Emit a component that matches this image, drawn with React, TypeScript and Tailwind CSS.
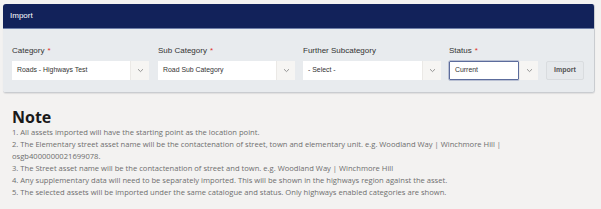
import React from "react";

function Chevron() {
  return (
    <svg width="7" height="5" viewBox="0 0 7 5" fill="none">
      <path d="M1 1.2 L3.5 3.6 L6 1.2" stroke="#8a8a8a" strokeWidth="0.9" />
    </svg>
  );
}

function SelectBox({ value, w, focus }: { value: string; w: string; focus?: boolean }) {
  return (
    <div className={`flex h-[19px] ${w} bg-white`}>
      <div
        className={`flex-1 flex items-center pl-[5px] text-[6.9px] text-[#333] ${
          focus ? "border border-[#5c6c9c] rounded-[1px] shadow-[0_0_0_0.5px_#8a96b8]" : ""
        }`}
      >
        {value}
      </div>
      <div className="w-[19px] flex items-center justify-center bg-[#f6f5f3] border-l border-[#ebe9e6]">
        <Chevron />
      </div>
    </div>
  );
}

function Field({
  label,
  req,
  value,
  w,
  focus,
}: {
  label: string;
  req?: boolean;
  value: string;
  w: string;
  focus?: boolean;
}) {
  return (
    <div className="flex flex-col">
      <div className="h-[10px] mb-[5px] flex items-center text-[8px] text-[#333] leading-none">
        {label}
        {req && <span className="text-[#e0312c] ml-[3px]">*</span>}
      </div>
      <SelectBox value={value} w={w} focus={focus} />
    </div>
  );
}

export default function App() {
  return (
    <div className="w-[601px] h-[209px] bg-[#f3f2f1] pt-[4px] pl-[3px] overflow-hidden font-['Liberation_Sans',Arial,sans-serif]">
      <div className="w-[592px] rounded-[3px] overflow-hidden border-r border-b border-[#c9ccd0] shadow-[0_1px_1px_rgba(0,0,0,0.08)]">
        <div className="h-[25px] bg-[#12225a] flex items-center pl-[7px] text-white text-[8px] border-b border-[#6e7fa8]">
          Import
        </div>
        <div className="bg-[#e8ebee] pt-[17px] pb-[12px] pl-[9px] flex items-end">
          <Field label="Category" req value="Roads - Highways Test" w="w-[137px]" />
          <div className="w-[9px]" />
          <Field label="Sub Category" req value="Road Sub Category" w="w-[137px]" />
          <div className="w-[8px]" />
          <Field label="Further Subcategory" value="- Select -" w="w-[138px]" />
          <div className="w-[8px]" />
          <Field label="Status" req value="Current" w="w-[89px]" focus />
          <div className="w-[8px]" />
          <button className="h-[19px] w-[38px] bg-[#e6e9ec] border border-[#d9dcdf] rounded-[2px] text-[7px] font-bold text-[#555] flex items-center justify-center">
            Import
          </button>
        </div>
      </div>
      <div className="pl-[9px] pt-[16px] font-['Open_Sans',sans-serif]">
        <div className="text-[16px] font-bold text-[#1a1a1a] leading-[16px]">Note</div>
        <div className="text-[7.6px] text-[#6e6e6e] leading-[12px] mt-[1px]">
          <div>1. All assets imported will have the starting point as the location point.</div>
          <div>
            2. The Elementary street asset name will be the contactenation of street, town and elementary unit. e.g.
            Woodland Way | Winchmore Hill |
            <br />
            osgb4000000021699078.
          </div>
          <div>3. The Street asset name will be the contactenation of street and town. e.g. Woodland Way | Winchmore Hill</div>
          <div>4. Any supplementary data will need to be separately imported. This will be shown in the highways region against the asset.</div>
          <div>5. The selected assets will be imported under the same catalogue and status. Only highways enabled categories are shown.</div>
        </div>
      </div>
    </div>
  );
}
